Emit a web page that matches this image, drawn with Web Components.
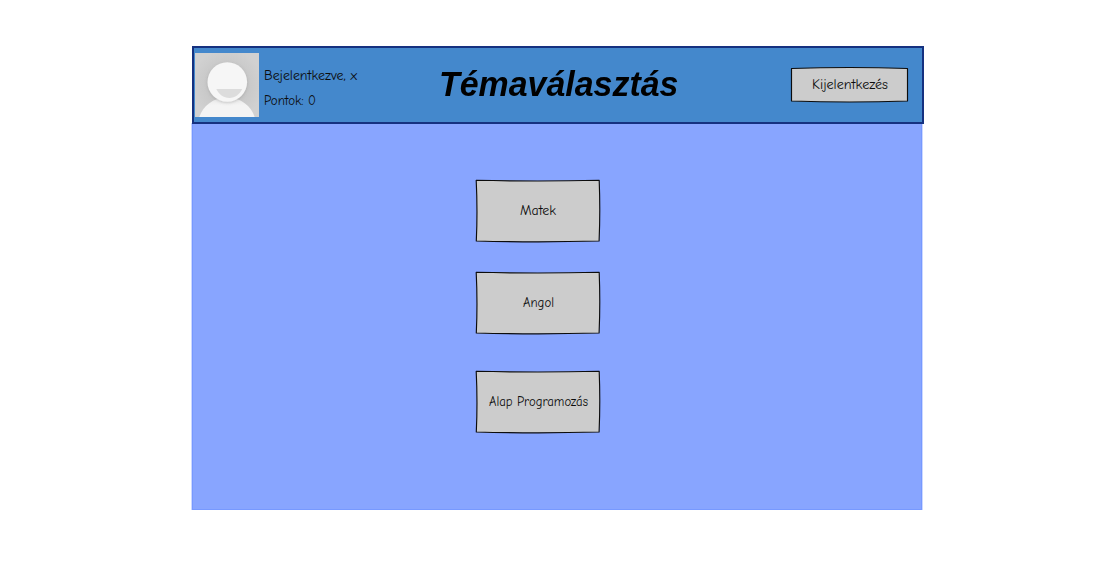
<!DOCTYPE html>
<html lang="hu">
<head>
<meta charset="utf-8">
<title>Témaválasztás</title>
<style>
body { margin: 0; background: #fff; }
</style>
</head>
<body>
<topic-app></topic-app>
<script>
const define = (name, html, setup) => {
  const template = document.createElement('template');
  template.innerHTML = html;
  customElements.define(name, class extends HTMLElement {
    constructor() {
      super();
      this.attachShadow({ mode: 'open' }).append(template.content.cloneNode(true));
    }
    connectedCallback() { if (setup) setup(this, this.shadowRoot); }
  });
};

// One line of hand-lettered text, set to the given width.
define('sketch-label', `
<style>
:host { display: block; flex: none; }
svg { display: block; height: 20px; overflow: visible; }
text { font: 13px "Comic Sans MS", "Comic Neue", "Open Sans", sans-serif; fill: #0c0c0c; }
</style>
<svg><text x="0" y="14" lengthAdjust="spacingAndGlyphs"></text></svg>`, (host, root) => {
  const text = root.querySelector('text');
  text.textContent = host.getAttribute('text');
  text.setAttribute('textLength', host.getAttribute('length'));
  root.querySelector('svg').style.width = host.getAttribute('length') + 'px';
});

// Button with slightly bowed, hand-drawn edges.
define('sketch-button', `
<style>
:host { display: block; flex: none; position: relative; }
.frame { position: absolute; inset: 0; width: 100%; height: 100%; overflow: visible; }
.frame path { fill: #ccc; stroke: #0c0c0c; stroke-width: 1.15; stroke-linejoin: round; }
div { position: relative; height: 100%; display: flex; align-items: center; justify-content: center; }
</style>
<svg class="frame"><path/></svg>
<div><slot></slot></div>`, (host, root) => {
  const w = host.clientWidth, h = host.clientHeight;
  const d = host.hasAttribute('flat')
    ? `M.5 1.5Q${w / 2} -.5 ${w - .5} 1.5V${h - 1}Q${w / 2} ${h + 1} .5 ${h - 1}Z`
    : `M.2 .3Q${w / 2} 1.7 ${w - .8} .3Q${w + .4} ${h / 2} ${w - .9} ${h - 1}Q${w / 2} ${h + .6} .3 ${h - 1}Q1.700 ${h / 2} .2 .3Z`;
  root.querySelector('path').setAttribute('d', d);
});

define('user-avatar', `
<style>
:host { display: block; flex: none; width: 64px; height: 64px; }
svg { display: block; }
</style>
<svg width="64" height="64" viewBox="0 0 64 64">
  <defs>
    <radialGradient id="bg" cx=".5" cy=".5" r=".7"><stop offset=".45" stop-color="#c8c8c8"/><stop offset=".8" stop-color="#d1d1d1"/></radialGradient>
    <linearGradient id="body" x1="0" y1="0" x2="0" y2="1"><stop offset="0" stop-color="#e6e6e6"/><stop offset=".4" stop-color="#f4f4f4"/></linearGradient>
    <filter id="shade" x="-20%" y="-20%" width="140%" height="140%"><feDropShadow dx="0" dy="1" stdDeviation="1.5" flood-color="#777" flood-opacity=".35"/></filter>
  </defs>
  <rect width="64" height="64" fill="url(#bg)"/>
  <path d="M4.300 64C8 53 18 44.500 32 44.500S56 53 59.700 64Z" fill="url(#body)"/>
  <circle cx="32.300" cy="29" r="19.800" fill="#f6f6f6" filter="url(#shade)"/>
  <path d="M21.300 36H47.200C45 41 40 45 34.300 45S23.500 41 21.300 36Z" fill="#dcdcdc"/>
</svg>`);

define('app-header', `
<style>
:host { box-sizing: border-box; display: grid; grid-template-columns: 245px 1fr 131px; align-items: center;
  position: relative; z-index: 1;
  width: 732px; height: 78px; background: #4488cc; border: 2px solid #153180; }
.user { display: flex; align-items: center; padding-left: 1px; gap: 5px; }
.info { display: flex; flex-direction: column; gap: 5px; padding-top: 6px; }
h1 { margin: -2px 0 0; font: italic bold 35px/40px "Liberation Sans", Arial, sans-serif; color: #000;
  white-space: nowrap; transform: scaleX(.969); transform-origin: 0 50%; }
sketch-button { width: 117px; height: 35px; margin-top: -1px; }
</style>
<div class="user">
  <user-avatar></user-avatar>
  <div class="info">
    <sketch-label text="Bejelentkezve, x" length="93"></sketch-label>
    <sketch-label text="Pontok: 0" length="52"></sketch-label>
  </div>
</div>
<h1>Témaválasztás</h1>
<sketch-button flat><sketch-label text="Kijelentkezés" length="76"></sketch-label></sketch-button>`);

define('topic-list', `
<style>
:host { box-sizing: border-box; display: flex; flex-direction: column; align-items: flex-start;
  width: 730px; height: 386px; padding: 56px 0 0 283px; background: #88a5ff;
  border: 1px solid #7799ff; border-top: 0; box-shadow: 0 0 0 1px #ccd8ff; }
sketch-button { width: 124px; height: 62px; margin-bottom: 30px; }
sketch-button:nth-of-type(2) { margin-bottom: 37px; }
</style>
<sketch-button><sketch-label text="Matek" length="36"></sketch-label></sketch-button>
<sketch-button><sketch-label text="Angol" length="31"></sketch-label></sketch-button>
<sketch-button><sketch-label text="Alap Programozás" length="99"></sketch-label></sketch-button>`);

define('topic-app', `
<style>:host { display: flow-root; padding: 46px 0 0 192px; }</style>
<app-header></app-header>
<topic-list></topic-list>`);
</script>
</body>
</html>
